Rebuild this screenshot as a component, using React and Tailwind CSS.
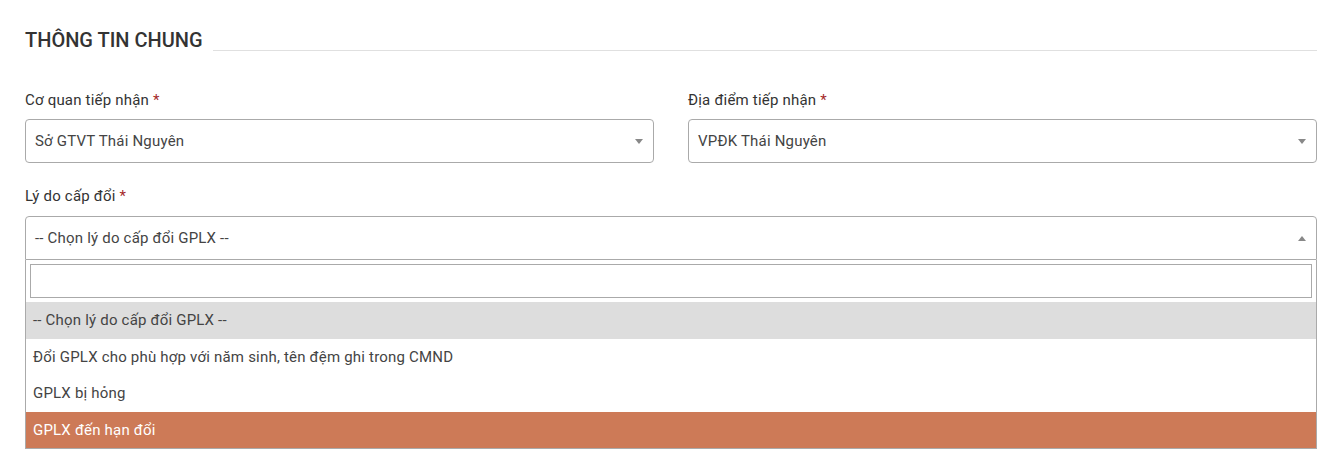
import React from "react";

const Arrow = ({ up }) => (
  <svg width="8" height="5" viewBox="0 0 8 5" className="shrink-0">
    {up ? <path d="M0 5 L4 0 L8 5 Z" fill="#888" /> : <path d="M0 0 L8 0 L4 5 Z" fill="#888" />}
  </svg>
);

const Label = ({ children }) => (
  <div className="text-[15px] leading-[20px] tracking-[0.2px] text-[#333]">
    {children} <span className="text-[#a52a2a]">*</span>
  </div>
);

const Select = ({ value }) => (
  <div className="flex items-center justify-between h-[44px] border border-[#aaa] rounded-[4px] pl-[9px] pr-[10px] bg-white">
    <span className="text-[15px] tracking-[0.2px] text-[#444]">{value}</span>
    <Arrow />
  </div>
);

const options = [
  { label: "-- Chọn lý do cấp đổi GPLX --", cls: "bg-[#dddddd] text-[#444]" },
  { label: "Đổi GPLX cho phù hợp với năm sinh, tên đệm ghi trong CMND", cls: "bg-white text-[#444]" },
  { label: "GPLX bị hỏng", cls: "bg-white text-[#444]" },
  { label: "GPLX đến hạn đổi", cls: "bg-[#cd7a57] text-white" },
];

export default function App() {
  return (
    <div className="w-[1329px] h-[455px] bg-white pl-[25px] pr-[12px] pt-[27px] font-['Roboto',sans-serif] overflow-hidden">
      {/* heading */}
      <div className="flex items-end">
        <h2 className="text-[20px] leading-[26px] font-medium text-[#333] uppercase">THÔNG TIN CHUNG</h2>
        <div className="flex-1 border-t border-[#e0e0e0] ml-[10px] mb-[2px]" />
      </div>

      <div className="grid grid-cols-2 gap-x-[34px] mt-[37px]">
        <div>
          <Label>Cơ quan tiếp nhận</Label>
          <div className="mt-[9px]">
            <Select value="Sở GTVT Thái Nguyên" />
          </div>
        </div>
        <div>
          <Label>Địa điểm tiếp nhận</Label>
          <div className="mt-[9px]">
            <Select value="VPĐK Thái Nguyên" />
          </div>
        </div>
      </div>

      <div className="mt-[23px]">
        <Label>Lý do cấp đổi</Label>
        <div className="mt-[10px]">
          <div className="flex items-center justify-between h-[44px] border border-[#aaa] rounded-t-[4px] pl-[9px] pr-[10px] bg-white">
            <span className="text-[15px] tracking-[0.2px] text-[#444]">-- Chọn lý do cấp đổi GPLX --</span>
            <Arrow up />
          </div>
          <div className="border-x border-b border-[#aaa] bg-white">
            <div className="px-[4px] pt-[4px] pb-[4px]">
              <div className="h-[34px] border border-[#aaa]" />
            </div>
            {options.map((o, i) => (
              <div key={i} className={`h-[36.5px] flex items-center pl-[7px] text-[15px] tracking-[0.2px] ${o.cls}`}>
                {o.label}
              </div>
            ))}
          </div>
        </div>
      </div>
    </div>
  );
}
